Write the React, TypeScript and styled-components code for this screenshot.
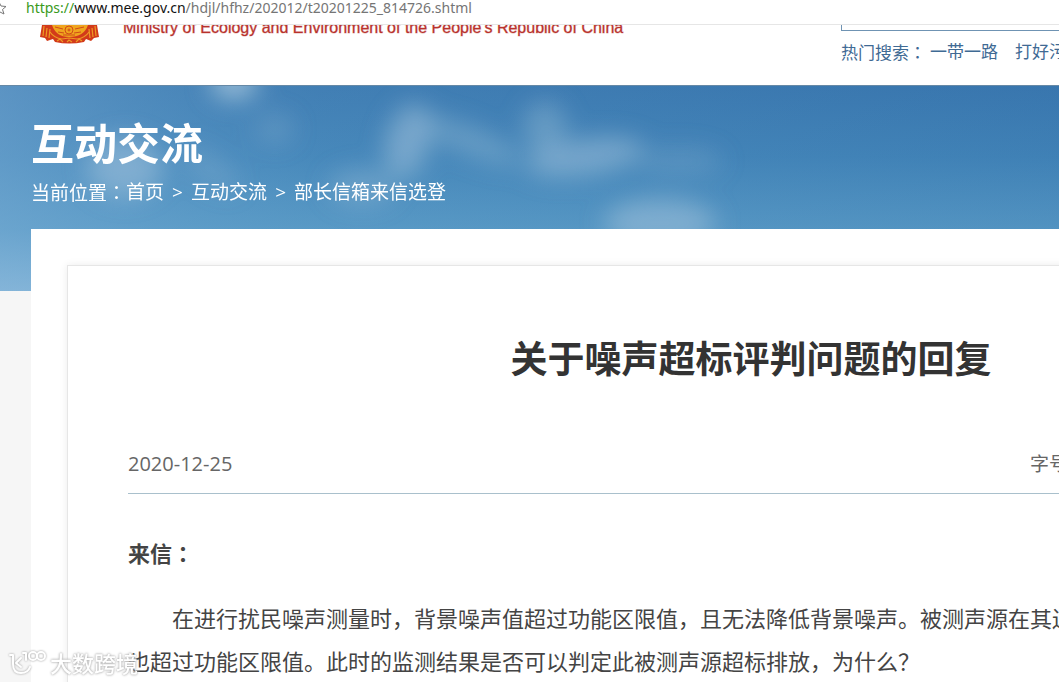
import React from "react";
import styled, { createGlobalStyle } from "styled-components";

const sans = `"Open Sans", "Noto Sans CJK SC", sans-serif`;

const GlobalStyle = createGlobalStyle`
  * { box-sizing: border-box; }
  body { margin: 0; background: #f6f6f6; font-family: ${sans}; color: #444; }
  h1, h2, h3, p { margin: 0; }
  a { color: inherit; text-decoration: none; }
`;

const Shell = styled.div`
  position: relative;
  display: flex;
  flex-direction: column;
  height: 100vh;
  overflow: hidden;
`;

const AddressBar = styled.div`
  flex: none;
  display: flex;
  align-items: flex-start;
  background: #fff;
  height: 25px;
  border-bottom: 1px solid #e6e6e6;
`;

const StarIcon = styled.svg`
  flex: none;
  width: 8px;
  height: 16px;
  margin-right: 18px;
`;

const Url = styled.div`
  font: 14px/16px "Noto Sans", sans-serif;
  color: #757575;
  white-space: nowrap;
`;

const Scheme = styled.span`
  color: #3a9a1c;
`;

const Host = styled.span`
  color: #111;
`;

const Header = styled.header`
  flex: none;
  display: flex;
  align-items: flex-start;
  height: 60px;
  min-width: 1471px;
  padding-left: 38px;
  background: #fff;
  overflow: hidden;
`;

const Emblem = styled.svg`
  width: 62px;
  height: 20px;
  margin-right: 23px;
`;

const Ministry = styled.div`
  width: 718px;
  margin-top: -7px;
  font: 16px/20px "Liberation Sans", sans-serif;
  color: #b8322c;
  -webkit-text-stroke: 1px rgba(184, 50, 44, 0.35);
  white-space: nowrap;
`;

const Search = styled.div`
  flex: 1;
`;

const SearchInput = styled.input`
  display: block;
  width: 400px;
  height: 32px;
  margin-top: -26px;
  border: 1px solid #6f93b3;
  background: #fff;
`;

const HotSearch = styled.nav`
  display: flex;
  gap: 17px;
  margin-top: 8px;
  font-size: 17px;
  line-height: 26px;
  color: #3f6a94;
`;

const Colon = styled.span`
  font-family: "Noto Sans CJK TC", sans-serif;
`;

const HotLabel = styled.span`
  margin-right: -13px;
`;

const Main = styled.main`
  flex: none;
  position: relative;
  min-width: 1502px;
  padding: 0 31px;
`;

const Sky = styled.svg`
  position: absolute;
  top: 0;
  left: 0;
  width: 100%;
  height: 206px;
`;

const Banner = styled.div`
  position: relative;
  height: 144px;
  padding-top: 31px;
  color: #fff;
`;

const Section = styled.h2`
  font-size: 43px;
  line-height: 56px;
  font-weight: 700;
`;

const Breadcrumb = styled.nav`
  display: flex;
  margin-top: 6px;
  font-size: 19px;
  line-height: 28px;
`;

const Separator = styled.span`
  width: 27px;
  text-align: center;
`;

const Panel = styled.div`
  position: relative;
  padding: 36px;
  background: #fff;
`;

const Article = styled.article`
  min-height: 600px;
  padding: 60px;
  border: 1px solid #e6e6e6;
  box-shadow: 0 0 8px rgba(0, 0, 0, 0.08);
`;

const Title = styled.h1`
  padding-top: 6px;
  font-size: 37px;
  line-height: 54px;
  color: #333;
  text-align: center;
`;

const Meta = styled.div`
  display: flex;
  justify-content: space-between;
  margin-top: 64px;
  padding-bottom: 15px;
  border-bottom: 1px solid #a9c0cc;
  font-size: 19px;
  line-height: 28px;
  color: #666;
`;

const PublishDate = styled.time`
  font-size: 20px;
`;

const FontSizes = styled.div`
  width: 344px;
`;

const Letter = styled.div`
  padding-top: 37px;
  font-size: 22px;
  line-height: 43px;
`;

const LetterHeading = styled.h3`
  margin-bottom: 22px;
  font-size: inherit;
`;

const Paragraph = styled.p`
  text-indent: 2em;
  white-space: nowrap;
`;

const Watermark = styled.div`
  position: absolute;
  left: 8px;
  bottom: 4px;
  display: flex;
  align-items: center;
  gap: 3px;
  color: #fff;
  font-size: 22px;
  line-height: 30px;
  font-weight: 500;
  text-shadow: 0 0 2px #aaa, 0 0 3px #bbb;
`;

const WatermarkLogo = styled.svg`
  width: 39px;
  height: 28px;
  filter: drop-shadow(0 0 1px #999);
`;

export default function App() {
  return (
    <Shell>
      <GlobalStyle />
      <AddressBar>
        <StarIcon viewBox="0 0 8 16" fill="none" stroke="#777">
          <path d="M-1 2 L1 6 L6 6.500 L2.500 9.500 L4 14 L-1 11.500" />
        </StarIcon>
        <Url>
          <Scheme>https://</Scheme>
          <Host>www.mee.gov.cn</Host>/hdjl/hfhz/202012/t20201225_814726.shtml
        </Url>
      </AddressBar>

      <Header>
        <Emblem viewBox="0 0 62 20" aria-label="National emblem">
          <path d="M4 0H59L61 12L56 13L53 16L48 14L46 17Q31 20 17 17L15 14L9 16L7 13L2 12Z" fill="#d23a1a" />
          <path d="M14 0H50Q46 12 31 12Q18 12 14 0Z" fill="#f0a51e" />
          <g fill="none" stroke="#ee9a24" strokeWidth="1.200">
            <path d="M6 1L5 11M9 3L8 12M57 1L58 11M54 3L55 12M12 4L11 13M51 4L52 13" />
            <path d="M12 7Q16 13 24 14L31 13L39 14Q47 13 51 7" />
            <path d="M19 16L22 14L25 17M29 17L31 15L34 17M38 17L41 14L44 16" />
          </g>
          <g fill="none" stroke="#d04a18" strokeWidth="1">
            <circle cx="31" cy="5" r="4" />
            <circle cx="31" cy="5" r="1" />
            <path d="M17 2L25 4M37 4L46 2M20 7L26 8M36 8L43 7M25 10H37" />
          </g>
        </Emblem>
        <Ministry>Ministry of Ecology and Environment of the People's Republic of China</Ministry>
        <Search>
          <SearchInput type="search" aria-label="搜索" />
          <HotSearch>
            <HotLabel>热门搜索<Colon>：</Colon></HotLabel>
            <a href="#belt">一带一路</a>
            <a href="#pollution">打好污染防治攻坚战</a>
          </HotSearch>
        </Search>
      </Header>

      <Main>
        <Sky viewBox="0 0 1502 206" preserveAspectRatio="xMinYMin slice" aria-hidden="true">
          <defs>
            <linearGradient id="sky" x1="0" y1="0" x2="0" y2="1">
              <stop offset="0" stopColor="#3a76ae" />
              <stop offset="0.35" stopColor="#4283b7" />
              <stop offset="0.7" stopColor="#5898c4" />
              <stop offset="1" stopColor="#8bb8d9" />
            </linearGradient>
            <linearGradient id="haze" x1="0" y1="0" x2="1059" y2="0" gradientUnits="userSpaceOnUse">
              <stop offset="0" stopColor="#7db1d8" stopOpacity="0.5" />
              <stop offset="0.3" stopColor="#5da0cc" stopOpacity="0.2" />
              <stop offset="1" stopColor="#2f74ae" stopOpacity="0.15" />
            </linearGradient>
            <filter id="soft" x="-50%" y="-80%" width="200%" height="260%">
              <feGaussianBlur stdDeviation="12" />
            </filter>
          </defs>
          <rect width="1502" height="206" fill="url(#sky)" />
          <rect width="1502" height="206" fill="url(#haze)" />
          <g fill="#a9c8dd" filter="url(#soft)">
            <ellipse cx="234" cy="-2" rx="24" ry="16" opacity="0.8" />
            <ellipse cx="125" cy="82" rx="38" ry="30" opacity="0.5" />
            <ellipse cx="210" cy="84" rx="34" ry="14" opacity="0.2" transform="rotate(35 210 84)" />
            <ellipse cx="275" cy="44" rx="20" ry="16" opacity="0.2" />
            <ellipse cx="408" cy="56" rx="22" ry="38" opacity="0.5" transform="rotate(15 408 56)" />
            <ellipse cx="470" cy="56" rx="56" ry="14" opacity="0.35" transform="rotate(22 470 56)" />
            <ellipse cx="545" cy="42" rx="22" ry="26" opacity="0.35" />
            <ellipse cx="585" cy="72" rx="60" ry="18" opacity="0.5" transform="rotate(-8 585 72)" />
            <ellipse cx="680" cy="76" rx="44" ry="14" opacity="0.2" />
            <ellipse cx="362" cy="102" rx="34" ry="18" opacity="0.3" />
            <ellipse cx="660" cy="138" rx="56" ry="24" opacity="0.5" />
          </g>
          <rect width="1502" height="1" fill="#6689a6" />
        </Sky>
        <Banner>
          <Section>互动交流</Section>
          <Breadcrumb>
            <span>当前位置<Colon>：</Colon></span>
            <a href="#home">首页</a>
            <Separator>&gt;</Separator>
            <a href="#hdjl">互动交流</a>
            <Separator>&gt;</Separator>
            <a href="#hfhz">部长信箱来信选登</a>
          </Breadcrumb>
        </Banner>
        <Panel>
          <Article>
            <Title>关于噪声超标评判问题的回复</Title>
            <Meta>
              <PublishDate dateTime="2020-12-25">2020-12-25</PublishDate>
              <FontSizes>字号</FontSizes>
            </Meta>
            <Letter>
              <LetterHeading>来信<Colon>：</Colon></LetterHeading>
              <Paragraph>
                在进行扰民噪声测量时，背景噪声值超过功能区限值，且无法降低背景噪声。被测声源在其边界
                <br />
                也超过功能区限值。此时的监测结果是否可以判定此被测声源超标排放，为什么？
              </Paragraph>
            </Letter>
          </Article>
        </Panel>
      </Main>

      <Watermark>
        <WatermarkLogo viewBox="0 0 39 28" fill="none" stroke="#fff" strokeWidth="2" strokeLinecap="round" strokeLinejoin="round">
          <path d="M2 6H5V15Q5 24 13 24Q20 24 22 18M13 9L8 14L13 18M15 4H18V11" />
          <circle cx="25" cy="7" r="4" />
          <circle cx="33" cy="7" r="4" />
        </WatermarkLogo>
        大数跨境
      </Watermark>
    </Shell>
  );
}
